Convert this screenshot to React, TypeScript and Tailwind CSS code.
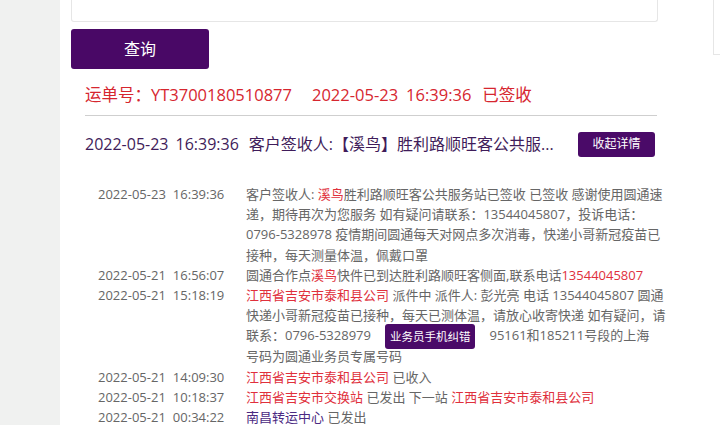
import React from "react";

const font = { fontFamily: "'Open Sans','Noto Sans CJK SC',sans-serif" };

type Row = { date: string; time: string; lines: React.ReactNode[] };

const Red = ({ children }: { children: React.ReactNode }) => (
  <span className="text-[#e0303c]">{children}</span>
);

const rows: Row[] = [
  {
    date: "2022-05-23",
    time: "16:39:36",
    lines: [
      <>
        客户签收人: <Red>溪鸟</Red>胜利路顺旺客公共服务站已签收 已签收 感谢使用圆通速
      </>,
      <>递，期待再次为您服务 如有疑问请联系：13544045807，投诉电话：</>,
      <>0796-5328978 疫情期间圆通每天对网点多次消毒，快递小哥新冠疫苗已</>,
      <>接种，每天测量体温，佩戴口罩</>,
    ],
  },
  {
    date: "2022-05-21",
    time: "16:56:07",
    lines: [
      <>
        圆通合作点<Red>溪鸟</Red>快件已到达胜利路顺旺客侧面,联系电话<Red>13544045807</Red>
      </>,
    ],
  },
  {
    date: "2022-05-21",
    time: "15:18:19",
    lines: [
      <>
        <Red>江西省吉安市泰和县公司</Red> 派件中 派件人: 彭光亮 电话 13544045807 圆通
      </>,
      <>快递小哥新冠疫苗已接种，每天已测体温，请放心收寄快递 如有疑问，请</>,
      <>
        联系：0796-5328979
        <span className="mx-[14px] my-[-3px] inline-block h-[25px] rounded-[3px] bg-[#4a0a68] px-[5px] align-middle text-[11.5px] leading-[25px] text-white">
          业务员手机纠错
        </span>
        95161和185211号段的上海
      </>,
      <>号码为圆通业务员专属号码</>,
    ],
  },
  {
    date: "2022-05-21",
    time: "14:09:30",
    lines: [
      <>
        <Red>江西省吉安市泰和县公司</Red> 已收入
      </>,
    ],
  },
  {
    date: "2022-05-21",
    time: "10:18:37",
    lines: [
      <>
        <Red>江西省吉安市交换站</Red> 已发出 下一站 <Red>江西省吉安市泰和县公司</Red>
      </>,
    ],
  },
  {
    date: "2022-05-21",
    time: "00:34:22",
    lines: [
      <>
        <span className="text-[#4b2a82]">南昌转运中心</span> 已发出
      </>,
    ],
  },
];

export default function App() {
  return (
    <div className="flex h-[425px] w-[720px] overflow-hidden bg-white" style={font}>
      {/* left gutter */}
      <div className="w-[60px] shrink-0 bg-[#f0f1f0]" />

      {/* main column */}
      <div className="flex w-[653px] shrink-0 flex-col">
        <div className="ml-[11px] h-[22px] w-[587px] shrink-0 rounded-b-[3px] border border-t-0 border-[#e6e6e6]" />

        <button className="ml-[11px] mt-[7px] h-[40px] w-[138px] shrink-0 rounded-[3px] bg-[#490866] text-[16px] text-white">
          查询
        </button>

        <div className="ml-[25px] mt-[13px] flex h-[26px] shrink-0 items-center whitespace-nowrap text-[16.5px] text-[#d6262f]">
          <span>运单号：YT3700180510877</span>
          <span className="ml-[20px]">
            2022-05-23<span className="ml-[8px]">16:39:36</span>
          </span>
          <span className="ml-[11px]">已签收</span>
        </div>

        <div className="ml-[25px] mt-[7px] h-px w-[572px] shrink-0 bg-[#cfcfcf]" />

        <div className="ml-[25px] mt-[15px] flex h-[26px] w-[570px] shrink-0 items-center justify-between whitespace-nowrap">
          <span className="text-[16px] text-[#3f1c5a]">
            2022-05-23<span className="ml-[7px]">16:39:36</span>
            <span className="ml-[10px]">客户签收人:【溪鸟】胜利路顺旺客公共服...</span>
          </span>
          <button className="h-[25px] w-[77px] rounded-[3px] bg-[#4a0a68] text-[12px] text-white">
            收起详情
          </button>
        </div>

        <div className="ml-[38px] mt-[27px] flex shrink-0 flex-col text-[13px] leading-[20.2px] text-[#666]">
          {rows.map((r, i) => (
            <div key={i} className="flex">
              <div className="w-[148px] shrink-0 whitespace-nowrap">
                {r.date}
                <span className="ml-[7px]">{r.time}</span>
              </div>
              <div className="whitespace-nowrap">
                {r.lines.map((l, j) => (
                  <div key={j}>{l}</div>
                ))}
              </div>
            </div>
          ))}
        </div>
      </div>

      {/* right panel edge */}
      <div className="h-[55px] flex-1 border-b border-l border-[#e6e6e6]" />
    </div>
  );
}
